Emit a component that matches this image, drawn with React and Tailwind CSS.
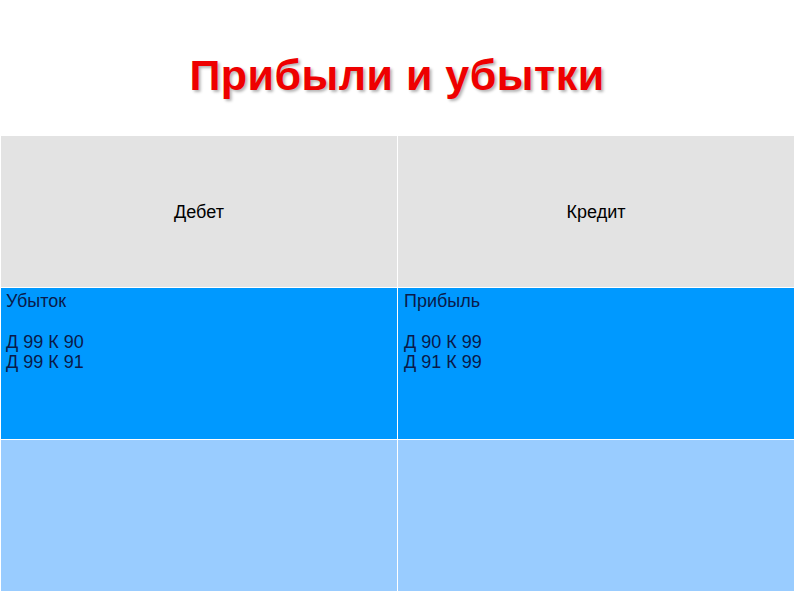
export default function App() {
  return (
    <div className="w-[794px] h-[595px] bg-white overflow-hidden font-['Liberation_Sans',Arial,sans-serif]">
      <div className="h-[136px] flex items-center justify-center pt-[14px]">
        <h1 className="text-[43px] font-bold text-[#ee0000] [text-shadow:2px_2px_3px_rgba(0,0,0,0.3)] tracking-[0.5px]">
          Прибыли и убытки
        </h1>
      </div>
      <div className="grid grid-cols-[396px_396px] grid-rows-[151px_151px_151px] gap-[1px] bg-white w-[794px] pl-[1px]">
        <div className="bg-[#e3e3e3] flex items-center justify-center text-[18px] text-black pt-[2px]">
          Дебет
        </div>
        <div className="bg-[#e3e3e3] flex items-center justify-center text-[18px] text-black pt-[2px]">
          Кредит
        </div>
        <div className="bg-[#0099ff] text-[18px] text-[#0a1a4a] px-[5px] pt-[3px] leading-[20px]">
          <p>Убыток</p>
          <p className="mt-[21px]">Д 99 К 90</p>
          <p>Д 99 К 91</p>
        </div>
        <div className="bg-[#0099ff] text-[18px] text-[#0a1a4a] px-[6px] pt-[3px] leading-[20px]">
          <p>Прибыль</p>
          <p className="mt-[21px]">Д 90 К 99</p>
          <p>Д 91 К 99</p>
        </div>
        <div className="bg-[#99ccff]" />
        <div className="bg-[#99ccff]" />
      </div>
    </div>
  );
}
